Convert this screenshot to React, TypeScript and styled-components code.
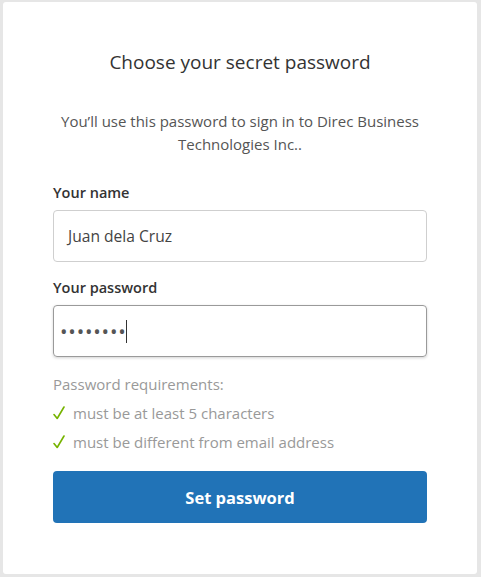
import React from "react";
import styled, { createGlobalStyle } from "styled-components";

const GlobalStyle = createGlobalStyle`
  html, body {
    margin: 0;
    padding: 0;
    background: #e6e6e6;
  }
  body {
    font-family: "Open Sans", "Noto Sans", "Liberation Sans", sans-serif;
  }
`;

const Page = styled.div`
  padding: 2px 4px 3px 3px;
`;

const Card = styled.div`
  background: #fff;
  border-radius: 3px;
  height: 572px;
  box-sizing: border-box;
  padding: 47px 50px 0 50px;
`;

const Title = styled.h1`
  margin: 0;
  text-align: center;
  font-size: 19px;
  line-height: 26px;
  font-weight: 400;
  color: #333;
`;

const Intro = styled.p`
  margin: 35px 0 0;
  text-align: center;
  font-size: 15px;
  line-height: 23px;
  color: #555;
`;

const Field = styled.div<{ $top: number }>`
  margin-top: ${(p) => p.$top}px;
  display: flex;
  flex-direction: column;
  gap: 7px;
`;

const Label = styled.label`
  font-size: 14.5px;
  line-height: 20px;
  font-weight: 600;
  color: #333;
`;

const Box = styled.div<{ $focused?: boolean }>`
  height: 52px;
  box-sizing: border-box;
  display: flex;
  align-items: center;
  padding: 0 14px;
  border: 1px solid ${(p) => (p.$focused ? "#9a9a9a" : "#cfcfcf")};
  border-radius: 4px;
  box-shadow: ${(p) => (p.$focused ? "0 1px 3px rgba(0,0,0,0.18)" : "none")};
  font-size: 15.6px;
  color: #444;
`;

const Dots = styled.span`
  margin-left: -8px;
  font-size: 20px;
  letter-spacing: 0.8px;
  color: #555;
`;

const Caret = styled.span`
  display: inline-block;
  width: 1px;
  height: 23px;
  background: #333;
  margin-left: -1px;
`;

const Rules = styled.div`
  margin-top: 17px;
  color: #999;
  font-size: 15px;
`;

const RulesHead = styled.div`
  line-height: 20px;
`;

const Rule = styled.div`
  display: flex;
  align-items: center;
  gap: 8px;
  margin-top: 9px;
  line-height: 20px;
`;

const Check = styled.svg`
  width: 12px;
  height: 14px;
  flex: none;
`;

const Button = styled.button`
  margin-top: 19px;
  width: 100%;
  height: 52px;
  border: none;
  border-radius: 4px;
  background: #2173b7;
  color: #fff;
  font-family: inherit;
  font-size: 16.5px;
  font-weight: 700;
  cursor: pointer;
`;

const CheckIcon = () => (
  <Check viewBox="0 0 12 14">
    <path d="M1 8.5 L4.2 12.5 L11 1" fill="none" stroke="#76b300" strokeWidth="1.6" strokeLinecap="round" strokeLinejoin="round" />
  </Check>
);

const rules = ["must be at least 5 characters", "must be different from email address"];

export default function App() {
  return (
    <>
      <GlobalStyle />
      <Page>
        <Card>
          <Title>Choose your secret password</Title>
          <Intro>
            You’ll use this password to sign in to Direc Business
            <br />
            Technologies Inc..
          </Intro>
          <Field $top={27}>
            <Label>Your name</Label>
            <Box>Juan dela Cruz</Box>
          </Field>
          <Field $top={16}>
            <Label>Your password</Label>
            <Box $focused>
              <Dots>••••••••</Dots>
              <Caret />
            </Box>
          </Field>
          <Rules>
            <RulesHead>Password requirements:</RulesHead>
            {rules.map((r) => (
              <Rule key={r}>
                <CheckIcon />
                {r}
              </Rule>
            ))}
          </Rules>
          <Button>Set password</Button>
        </Card>
      </Page>
    </>
  );
}
